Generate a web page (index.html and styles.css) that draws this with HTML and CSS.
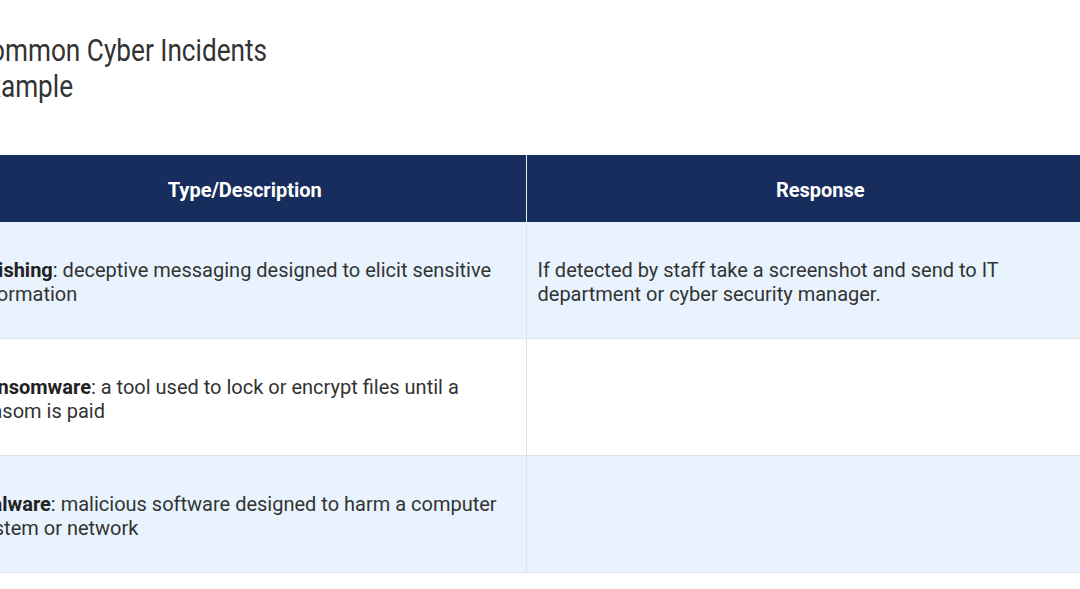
FILE: index.html
```html
<!DOCTYPE html>
<html lang="en">
<head>
<meta charset="utf-8">
<title>Common Cyber Incidents Example</title>
<link rel="stylesheet" href="styles.css">
</head>
<body>
<main class="page">
  <h1 class="title">Common Cyber Incidents<br>Example</h1>
  <table class="incidents">
    <colgroup>
      <col class="col-type">
      <col class="col-response">
    </colgroup>
    <thead>
      <tr>
        <th>Type/Description</th>
        <th>Response</th>
      </tr>
    </thead>
    <tbody>
      <tr class="shaded">
        <td><strong>Phishing</strong>: deceptive messaging designed to elicit sensitive information</td>
        <td>If detected by staff take a screenshot and send to IT department or cyber security manager.</td>
      </tr>
      <tr>
        <td><strong>Ransomware</strong>: a tool used to lock or encrypt files until a ransom is paid</td>
        <td></td>
      </tr>
      <tr class="shaded">
        <td><strong>Malware</strong>: malicious software designed to harm a computer system or network</td>
        <td></td>
      </tr>
    </tbody>
  </table>
</main>
</body>
</html>
```
FILE: styles.css
```css
html, body {
  margin: 0;
  padding: 0;
  background: #ffffff;
  overflow: hidden;
}

body {
  font-family: Roboto, "Noto Sans", sans-serif;
  color: #333333;
}

.page {
  margin-left: -36px;
  padding-top: 33px;
}

.title {
  margin: 0 0 50px 9px;
  font-family: Roboto, sans-serif;
  font-weight: 400;
  font-size: 31px;
  line-height: 36px;
  color: #333333;
  transform: scaleX(0.845);
  transform-origin: left top;
  white-space: nowrap;
}

.incidents {
  border-collapse: collapse;
  table-layout: fixed;
  width: 1150px;
  font-size: 20px;
  line-height: 24px;
}

.col-type {
  width: 562px;
}

.col-response {
  width: 588px;
}

.incidents th {
  background: #172d5e;
  color: #ffffff;
  font-weight: 700;
  font-size: 20px;
  text-align: center;
  padding: 23px 10px 20px;
  border-left: 1px solid #e6ebf2;
}

.incidents th:first-child {
  border-left: none;
}

.incidents td {
  padding: 36px 10px 32px 11px;
  vertical-align: middle;
  border-bottom: 1px solid #dde3e9;
  border-left: 1px solid #dde3e9;
}

.incidents td:first-child {
  border-left: none;
  padding-left: 10px;
}

.incidents td strong {
  font-weight: 700;
  color: #222222;
}

.shaded td {
  background: #e8f3fd;
}
```
